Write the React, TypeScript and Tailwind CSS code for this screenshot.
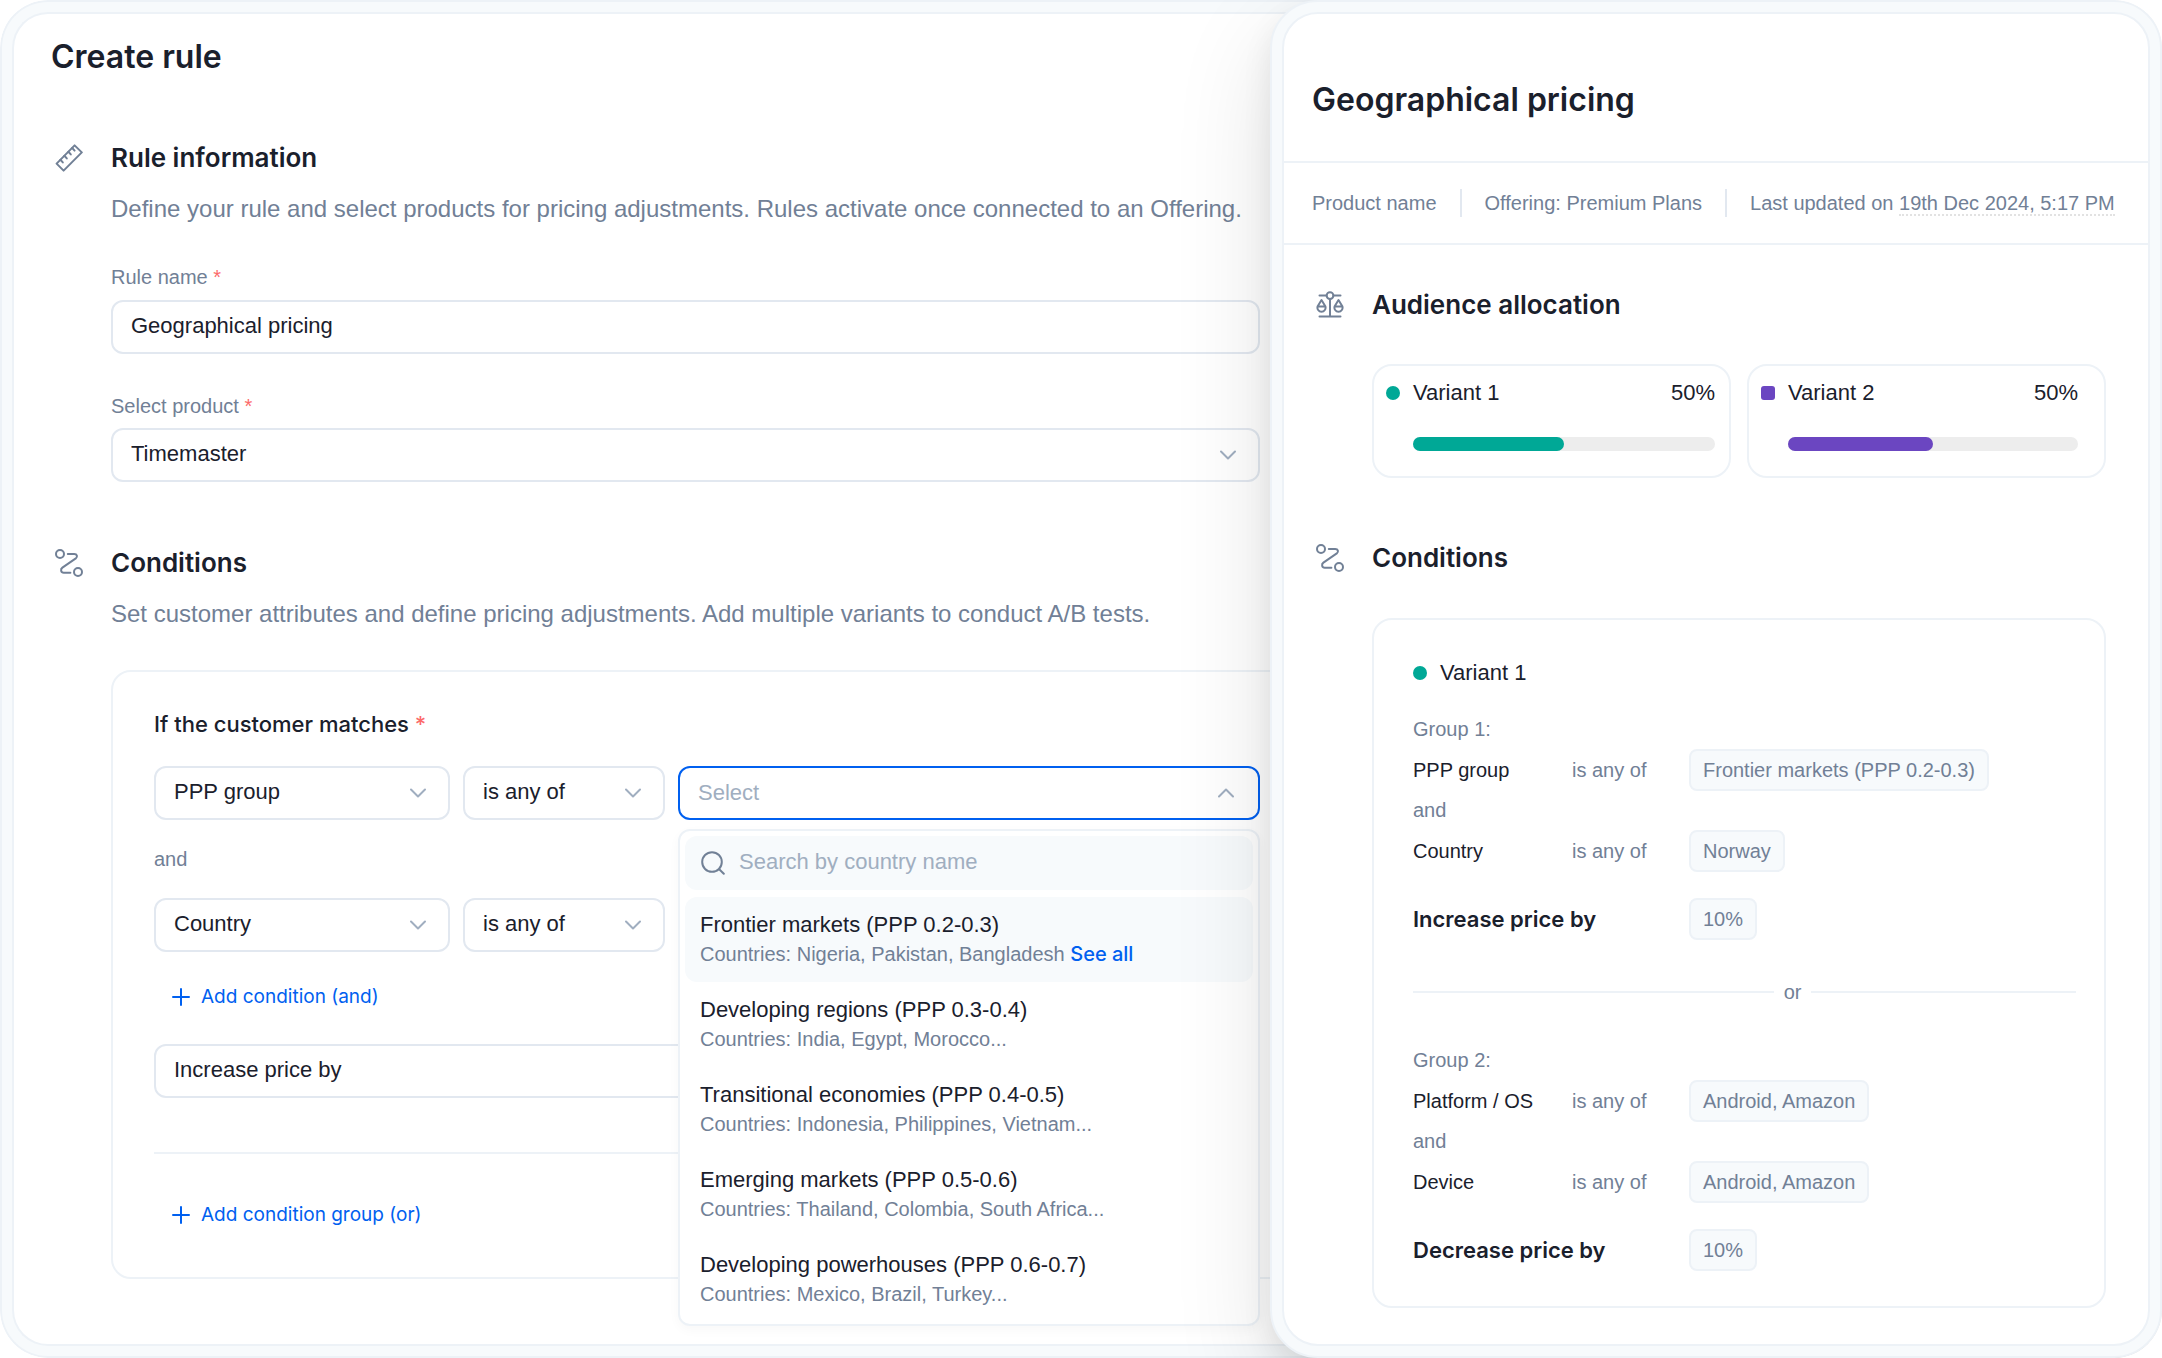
import React, { useId } from "react";

const FIELD =
  "h-[54px] w-full rounded-xl border-2 border-[#e2e8f0] bg-transparent pb-0.5 pl-[18px] pr-12 text-[22px] leading-7 text-[#1a202c] outline-none";

function RulerIcon() {
  return (
    <svg width="28" height="28" viewBox="0 0 28 28" fill="none" stroke="#718096" strokeWidth="2" strokeLinejoin="round" strokeLinecap="round">
      <path d="M1.6 19.600 19.6 1.400 26.8 8.400 8.600 26.6Z" />
      <path d="M5.400 15.800l2.400 2.600M9.400 11.800l2.400 2.600M13.400 7.800l2.400 2.600M17.200 4l2.400 2.600" />
    </svg>
  );
}

function RouteIcon() {
  return (
    <svg width="28" height="28" viewBox="0 0 28 28" fill="none" stroke="#718096" strokeWidth="2" strokeLinecap="round" strokeLinejoin="round">
      <circle cx="5" cy="5" r="4" />
      <circle cx="23" cy="23" r="4" />
      <path d="M12.8 5h6.4c3 0 3.600 2.800 1.600 4.400L7.400 18.600c-2.200 1.600-1.600 5.200 1.400 5.200h6.600" />
    </svg>
  );
}

function ScalesIcon() {
  return (
    <svg width="28" height="28" viewBox="0 0 28 28" fill="none" stroke="#718096" strokeWidth="2" strokeLinecap="round" strokeLinejoin="round">
      <circle cx="14" cy="4.600" r="3.400" />
      <path d="M3.500 4.600h7M17.500 4.600h7M14 8v17.600M3.500 25.600h21" />
      <path d="M5.500 9 9.300 15.200c1 2.800-1 5.600-3.800 5.600s-4.800-2.800-3.800-5.600ZM1.800 15.400h7.400" />
      <path d="M22.500 9l3.800 6.200c1 2.800-1 5.600-3.800 5.600s-4.800-2.800-3.800-5.600ZM18.800 15.400h7.400" />
    </svg>
  );
}

function Chevron({ up = false }: { up?: boolean }) {
  return (
    <svg width="16" height="10" viewBox="0 0 16 10" fill="none" stroke="#a0aec0" strokeWidth="2" strokeLinecap="round" strokeLinejoin="round">
      <path d={up ? "M1 8.500 8 1.500 15 8.500" : "M1 1.500 8 8.500 15 1.500"} />
    </svg>
  );
}

function PlusIcon() {
  return (
    <svg width="18" height="18" viewBox="0 0 18 18" fill="none" stroke="currentColor" strokeWidth="2" strokeLinecap="round">
      <path d="M9 1v16M1 9h16" />
    </svg>
  );
}

function SearchIcon() {
  return (
    <svg width="24" height="24" viewBox="0 0 24 24" fill="none" stroke="#718096" strokeWidth="2" strokeLinecap="round">
      <circle cx="11" cy="11" r="9.800" />
      <path d="M18.200 18.200 22.800 22.800" />
    </svg>
  );
}

function Star() {
  return <span className="text-[#fc6a6a]">*</span>;
}

function Select({ id, label, value }: { id?: string; label?: string; value: string }) {
  return (
    <div className="relative">
      <select id={id} aria-label={label} defaultValue={value} className={"appearance-none " + FIELD}>
        <option>{value}</option>
      </select>
      <span className="pointer-events-none absolute inset-y-0 right-6 flex items-center">
        <Chevron />
      </span>
    </div>
  );
}

function Section({
  icon,
  title,
  text,
  className = "",
  children,
}: {
  icon: React.ReactNode;
  title: string;
  text?: string;
  className?: string;
  children: React.ReactNode;
}) {
  return (
    <section className={"grid grid-cols-[60px_minmax(0,1fr)] " + className}>
      <div className="flex h-8 items-center pl-1">{icon}</div>
      <div>
        <h2 className="font-['Inter'] text-[26px] leading-8 font-semibold">{title}</h2>
        {text && <p className="mt-[19px] text-2xl leading-8 whitespace-nowrap text-[#718096]">{text}</p>}
        {children}
      </div>
    </section>
  );
}

const OPTIONS = [
  ["Frontier markets (PPP 0.2-0.3)", "Countries: Nigeria, Pakistan, Bangladesh"],
  ["Developing regions (PPP 0.3-0.4)", "Countries: India, Egypt, Morocco..."],
  ["Transitional economies (PPP 0.4-0.5)", "Countries: Indonesia, Philippines, Vietnam..."],
  ["Emerging markets (PPP 0.5-0.6)", "Countries: Thailand, Colombia, South Africa..."],
  ["Developing powerhouses (PPP 0.6-0.7)", "Countries: Mexico, Brazil, Turkey..."],
];

function GroupPicker() {
  return (
    <div className="relative">
      <button
        type="button"
        aria-haspopup="listbox"
        aria-expanded="true"
        className="flex h-[54px] w-full items-center justify-between rounded-xl border-2 border-[#0060f0] pr-6 pl-[18px] text-[22px] leading-7 text-[#a0aec0]"
      >
        Select
        <Chevron up />
      </button>
      <div className="absolute inset-x-0 top-full mt-[9px] rounded-xl border-2 border-[#edf2f7] bg-white px-[5px] pt-[5px] pb-0.5 shadow-[0_4px_12px_rgba(0,0,0,0.03)]">
        <label className="flex h-[54px] items-center gap-[14px] rounded-xl bg-[#f7fafc] px-4">
          <SearchIcon />
          <input
            type="search"
            aria-label="Search by country name"
            placeholder="Search by country name"
            className="min-w-0 flex-1 bg-transparent pb-0.5 text-[22px] leading-7 outline-none placeholder:text-[#a0aec0]"
          />
        </label>
        <ul role="listbox" className="mt-[7px]">
          {OPTIONS.map(([name, countries], i) => (
            <li
              key={name}
              role="option"
              aria-selected={i === 0}
              className={"h-[85px] rounded-xl px-[15px] pt-[13px] " + (i === 0 ? "bg-[#f7fafc]" : "")}
            >
              <div className="text-[22px] leading-[30px]">{name}</div>
              <div className="text-xl leading-7 text-[#718096]">
                {countries}
                {i === 0 && (
                  <>
                    {" "}
                    <a href="#countries" className="font-['Inter'] text-[20px] font-medium text-[#0060f0]">
                      See all
                    </a>
                  </>
                )}
              </div>
            </li>
          ))}
        </ul>
      </div>
    </div>
  );
}

function AddButton({ children, className = "" }: { children: string; className?: string }) {
  return (
    <button type="button" className={"ml-[18px] flex items-center gap-[11px] font-['Inter'] text-[19px] leading-7 text-[#0060f0] " + className}>
      <PlusIcon />
      {children}
    </button>
  );
}

function CreateRule() {
  const nameId = useId();
  const productId = useId();
  return (
    <main className="col-start-1 row-start-1 -mr-15 rounded-l-[48px] border-2 border-r-0 border-[#edf2f7] bg-[#f7fafc] py-2.5 pl-2.5">
      <div className="h-full rounded-l-[36px] border-2 border-r-0 border-[#edf2f7] bg-white pt-[23px] pr-[70px] pb-16 pl-[37px]">
        <h1 className="font-['Inter'] text-[32px] leading-10 font-semibold">Create rule</h1>

        <Section
          icon={<RulerIcon />}
          title="Rule information"
          text="Define your rule and select products for pricing adjustments. Rules activate once connected to an Offering."
          className="mt-[65px]"
        >
          <label htmlFor={nameId} className="mt-10 block text-xl leading-6 text-[#718096]">
            Rule name <Star />
          </label>
          <input id={nameId} defaultValue="Geographical pricing" className={"mt-[11px] " + FIELD} />
          <label htmlFor={productId} className="mt-10 mb-2.5 block text-xl leading-6 text-[#718096]">
            Select product <Star />
          </label>
          <Select id={productId} value="Timemaster" />
        </Section>

        <Section
          icon={<RouteIcon />}
          title="Conditions"
          text="Set customer attributes and define pricing adjustments. Add multiple variants to conduct A/B tests."
          className="mt-[65px]"
        >
          <div className="mt-10 -mr-10 rounded-[20px] border-2 border-[#edf2f7] pt-[38px] pr-[38px] pb-12 pl-[41px]">
            <h3 className="font-['Inter'] text-[22px] leading-7 font-medium">
              If the customer matches <Star />
            </h3>
            <div className="mt-7 grid grid-cols-[296fr_202fr_582fr] gap-[13px]">
              <Select label="Attribute" value="PPP group" />
              <Select label="Operator" value="is any of" />
              <GroupPicker />
            </div>
            <p className="my-[27px] text-xl leading-6 text-[#718096]">and</p>
            <div className="grid grid-cols-[296fr_202fr_582fr] gap-[13px]">
              <Select label="Attribute" value="Country" />
              <Select label="Operator" value="is any of" />
            </div>
            <AddButton className="mt-[31px]">Add condition (and)</AddButton>
            <div className="mt-[33px]">
              <input aria-label="Price adjustment" defaultValue="Increase price by" className={FIELD} />
            </div>
            <hr className="mt-[54px] border-t-2 border-[#edf2f7]" />
            <AddButton className="mt-[47px]">Add condition group (or)</AddButton>
          </div>
        </Section>
      </div>
    </main>
  );
}

function VariantCard({ name, marker, bar, className }: { name: string; marker: string; bar: string; className: string }) {
  const share = 50;
  return (
    <div className={"rounded-[20px] border-2 border-[#edf2f7] pt-[11px] pb-[25px] pl-3 " + className}>
      <div className="grid grid-cols-[14px_1fr_auto] items-center gap-x-[13px] text-[22px] leading-8">
        <span className={"size-[14px] " + marker} />
        <span>{name}</span>
        <span>{share}%</span>
        <div className="col-span-2 col-start-2 mt-7 h-[14px] rounded-full bg-[#ededed]">
          <div className={"h-full rounded-full " + bar} style={{ width: `${share}%` }} />
        </div>
      </div>
    </div>
  );
}

function Chip({ children }: { children: string }) {
  return (
    <span className="flex h-[42px] items-center rounded-lg border-2 border-[#edf2f7] bg-[#f7fafc] px-3 text-xl leading-6 whitespace-nowrap text-[#718096]">
      {children}
    </span>
  );
}

const ROW = "grid h-[41px] grid-cols-[159px_117px_1fr] items-center justify-items-start text-xl leading-6";

function Group({ name, rows, action }: { name: string; rows: [string, string][]; action: string }) {
  return (
    <div>
      <p className="text-xl leading-10 text-[#718096]">{name}</p>
      {rows.map(([attribute, value], i) => (
        <React.Fragment key={attribute}>
          {i > 0 && <p className="text-xl leading-10 text-[#718096]">and</p>}
          <div className={ROW}>
            <span>{attribute}</span>
            <span className="text-[#718096]">is any of</span>
            <Chip>{value}</Chip>
          </div>
        </React.Fragment>
      ))}
      <div className={"mt-[27px] " + ROW}>
        <strong className="col-span-2 font-['Inter'] text-[22px] font-semibold">{action}</strong>
        <Chip>10%</Chip>
      </div>
    </div>
  );
}

function Summary() {
  return (
    <aside className="z-10 col-start-2 row-start-1 rounded-[48px] border-2 border-[#edf2f7] bg-[#f7fafc] p-2.5 shadow-[0_36px_100px_rgba(0,0,0,0.12),0_14px_30px_rgba(0,0,0,0.08)]">
      <div className="h-full rounded-[36px] border-2 border-[#edf2f7] bg-white pb-8">
        <h1 className="border-b-2 border-[#edf2f7] px-7 pt-[66px] pb-[41px] font-['Inter'] text-[32px] leading-10 font-semibold">
          Geographical pricing
        </h1>
        <div className="flex items-center gap-[23px] border-b-2 border-[#edf2f7] px-7 py-[26px] text-xl leading-7 whitespace-nowrap text-[#718096]">
          <span>Product name</span>
          <span className="h-7 border-l-2 border-[#e2e8f0]" />
          <span>Offering: Premium Plans</span>
          <span className="h-7 border-l-2 border-[#e2e8f0]" />
          <span>
            Last updated on <time className="border-b-2 border-dotted border-[#e2e2e2]">19th Dec 2024, 5:17 PM</time>
          </span>
        </div>

        <div className="pr-[42px] pl-7">
          <Section icon={<ScalesIcon />} title="Audience allocation" className="mt-11">
            <div className="mt-[43px] grid grid-cols-2 gap-4">
              <VariantCard name="Variant 1" marker="rounded-full bg-[#00a896]" bar="bg-[#00a896]" className="pr-[14px]" />
              <VariantCard name="Variant 2" marker="rounded-[3px] bg-[#6b46c1]" bar="bg-[#6b46c1]" className="pr-[26px]" />
            </div>
          </Section>

          <Section icon={<RouteIcon />} title="Conditions" className="mt-16">
            <div className="mt-11 rounded-[20px] border-2 border-[#edf2f7] pt-[37px] pr-7 pb-9 pl-[39px]">
              <p className="flex items-center gap-[13px] text-[22px] leading-8">
                <span className="size-[14px] rounded-full bg-[#00a896]" />
                Variant 1
              </p>
              <div className="mt-5">
                <Group
                  name="Group 1:"
                  rows={[
                    ["PPP group", "Frontier markets (PPP 0.2-0.3)"],
                    ["Country", "Norway"],
                  ]}
                  action="Increase price by"
                />
              </div>
              <div className="mt-[41px] mb-9 flex items-center gap-2.5 text-xl leading-6 text-[#718096]">
                <hr className="flex-[364] border-t-2 border-[#edf2f7]" />
                or
                <hr className="flex-[267] border-t-2 border-[#edf2f7]" />
              </div>
              <Group
                name="Group 2:"
                rows={[
                  ["Platform / OS", "Android, Amazon"],
                  ["Device", "Android, Amazon"],
                ]}
                action="Decrease price by"
              />
            </div>
          </Section>
        </div>
      </div>
    </aside>
  );
}

export default function App() {
  return (
    <div className="min-h-screen bg-white font-['Liberation_Sans',sans-serif] text-[#1a202c]">
      <div className="grid min-h-screen grid-cols-[1270fr_892fr] overflow-hidden rounded-[48px]">
        <CreateRule />
        <Summary />
      </div>
    </div>
  );
}
